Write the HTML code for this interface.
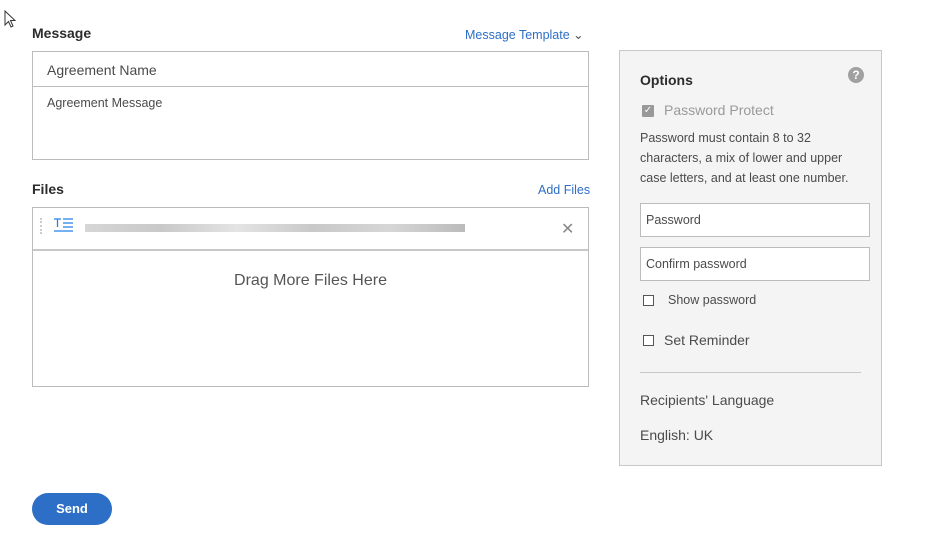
<!DOCTYPE html>
<html><head><style>
body{margin:0;width:940px;height:550px;background:#fff;font-family:"Liberation Sans",sans-serif;position:relative;overflow:hidden;color:#4b4b4b}
.a{position:absolute}
.h{font-weight:bold;font-size:14px;color:#2c2c2c}
.link{color:#2d6fc6;font-size:12.5px}
.box{border:1px solid #bcbcbc;background:#fff;box-sizing:border-box}
.inp{position:absolute;left:640px;width:230px;height:34px;border:1px solid #bcbcbc;background:#fff;box-sizing:border-box;font-size:12.5px;color:#4b4b4b;padding:9px 5px}
.cb{position:absolute;width:9px;height:9px;border:1.5px solid #555;background:#fff}
</style></head><body>
<svg class="a" style="left:4px;top:10px" width="14" height="20"><path d="M1 1 L1 15 L4.5 11.5 L7 17 L9 16 L6.5 10.5 L11 10.5 Z" fill="#fff" stroke="#333" stroke-width="1"/></svg>
<div class="a h" style="left:32px;top:25px">Message</div>
<div class="a link" style="left:465px;top:27px">Message Template <span style="color:#555">&#8964;</span></div>
<div class="a box" style="left:32px;top:51px;width:557px;height:109px"></div>
<div class="a" style="left:33px;top:86px;width:555px;height:1px;background:#bcbcbc"></div>
<div class="a" style="left:47px;top:62px;font-size:14px">Agreement Name</div>
<div class="a" style="left:47px;top:96px;font-size:12.5px">Agreement Message</div>
<div class="a h" style="left:32px;top:181px">Files</div>
<div class="a link" style="left:538px;top:183px">Add Files</div>
<div class="a box" style="left:32px;top:207px;width:557px;height:180px"></div>
<div class="a" style="left:33px;top:249px;width:555px;height:2px;background:#c8c8c8"></div>
<div class="a" style="left:40px;top:218px;width:2px;height:16px;border-left:2px dotted #ccc"></div>
<svg class="a" style="left:53px;top:217px" width="22" height="18"><path d="M1 2H8M4.5 2V10M10 2H20M10 6H20M10 10H20M1 14H20" stroke="#2680eb" stroke-width="1.3" fill="none"/></svg>
<div class="a" style="left:85px;top:224px;width:380px;height:8px;background:linear-gradient(90deg,#ccc,#bbb 20%,#ddd 40%,#bbb 60%,#ccc 80%,#aaa);opacity:.8"></div>
<div class="a" style="left:561px;top:219px;font-size:16px;color:#888">&#x2715;</div>
<div class="a" style="left:33px;top:272px;width:555px;text-align:center;font-size:16px;color:#555">Drag More Files Here</div>
<div class="a" style="left:619px;top:50px;width:263px;height:416px;background:#f4f4f4;border:1px solid #c8c8c8;box-sizing:border-box"></div>
<div class="a h" style="left:640px;top:72px">Options</div>
<div class="a" style="left:848px;top:67px;width:16px;height:16px;border-radius:50%;background:#a0a0a0;color:#fff;font-size:12px;font-weight:bold;text-align:center;line-height:16px">?</div>
<div class="a" style="left:642px;top:105px;width:12px;height:12px;background:#999;border-radius:1px;color:#fff;font-size:10px;line-height:12px;text-align:center">&#10003;</div>
<div class="a" style="left:664px;top:102px;font-size:14px;color:#9a9a9a">Password Protect</div>
<div class="a" style="left:640px;top:128px;font-size:12.5px;line-height:20px;width:230px">Password must contain 8 to 32 characters, a mix of lower and upper case letters, and at least one number.</div>
<div class="inp" style="top:203px">Password</div>
<div class="inp" style="top:247px">Confirm password</div>
<div class="cb" style="left:643px;top:295px"></div>
<div class="a" style="left:668px;top:293px;font-size:12.5px">Show password</div>
<div class="cb" style="left:643px;top:335px"></div>
<div class="a" style="left:664px;top:332px;font-size:14px">Set Reminder</div>
<div class="a" style="left:640px;top:372px;width:221px;height:1px;background:#c8c8c8"></div>
<div class="a" style="left:640px;top:392px;font-size:14px">Recipients' Language</div>
<div class="a" style="left:640px;top:427px;font-size:14px">English: UK</div>
<div class="a" style="left:32px;top:493px;width:80px;height:32px;border-radius:16px;background:#2d6fc6;color:#fff;font-weight:bold;font-size:13px;text-align:center;line-height:32px">Send</div>
</body></html>
